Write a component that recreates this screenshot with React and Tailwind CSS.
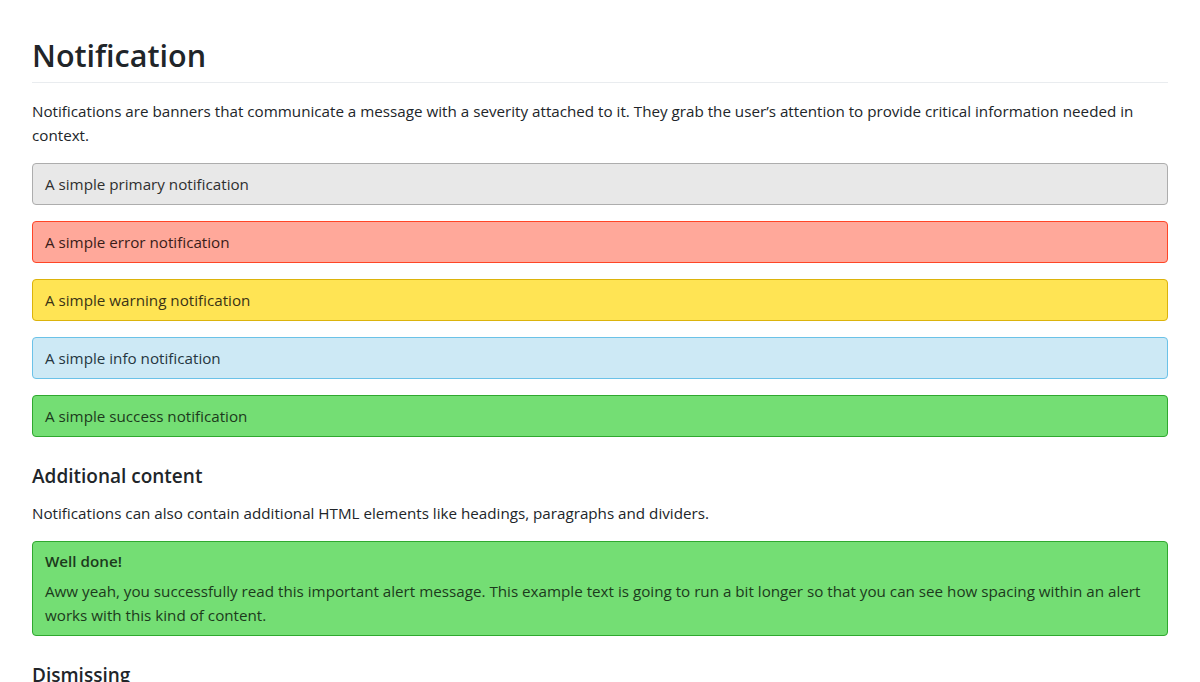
import React from "react";

const alerts = [
  { text: "A simple primary notification", cls: "bg-[#e8e8e8] border-[#adadad] text-[#2f2f2f]" },
  { text: "A simple error notification", cls: "bg-[#ffa89a] border-[#ff4526] text-[#3a1c18]" },
  { text: "A simple warning notification", cls: "bg-[#ffe454] border-[#dcb30b] text-[#3a3316]" },
  { text: "A simple info notification", cls: "bg-[#cde9f5] border-[#6bc2e8] text-[#253640]" },
  { text: "A simple success notification", cls: "bg-[#74de74] border-[#2fa82f] text-[#1c3a1c]" },
];

export default function App() {
  return (
    <div className="min-h-screen bg-white px-8 pt-[31px] text-[#212529] font-['Open_Sans',sans-serif] text-[15.2px] leading-6">
      <h1 className="text-[30.5px] leading-[48px] font-semibold text-[#212529] pb-[3px] border-b border-[#e9ecef]">Notification</h1>
      <p className="mt-[16px] text-[#212529]">
        Notifications are banners that communicate a message with a severity attached to it. They grab the user’s attention to provide critical information needed in context.
      </p>
      <div className="mt-[16px] flex flex-col gap-4">
        {alerts.map((a) => (
          <div key={a.text} className={`border rounded px-3 py-2 ${a.cls}`}>
            {a.text}
          </div>
        ))}
      </div>
      <h2 className="mt-[24px] text-[19px] leading-[30px] font-semibold">Additional content</h2>
      <p className="mt-[10px]">Notifications can also contain additional HTML elements like headings, paragraphs and dividers.</p>
      <div className="mt-[16px] border rounded px-3 pt-[7px] pb-2 bg-[#74de74] border-[#2fa82f] text-[#1c3a1c]">
        <div className="font-semibold">Well done!</div>
        <p className="mt-[6px]">
          Aww yeah, you successfully read this important alert message. This example text is going to run a bit longer so that you can see how spacing within an alert works with this kind of content.
        </p>
      </div>
      <h2 className="mt-[24px] text-[19px] leading-[30px] font-semibold">Dismissing</h2>
    </div>
  );
}
